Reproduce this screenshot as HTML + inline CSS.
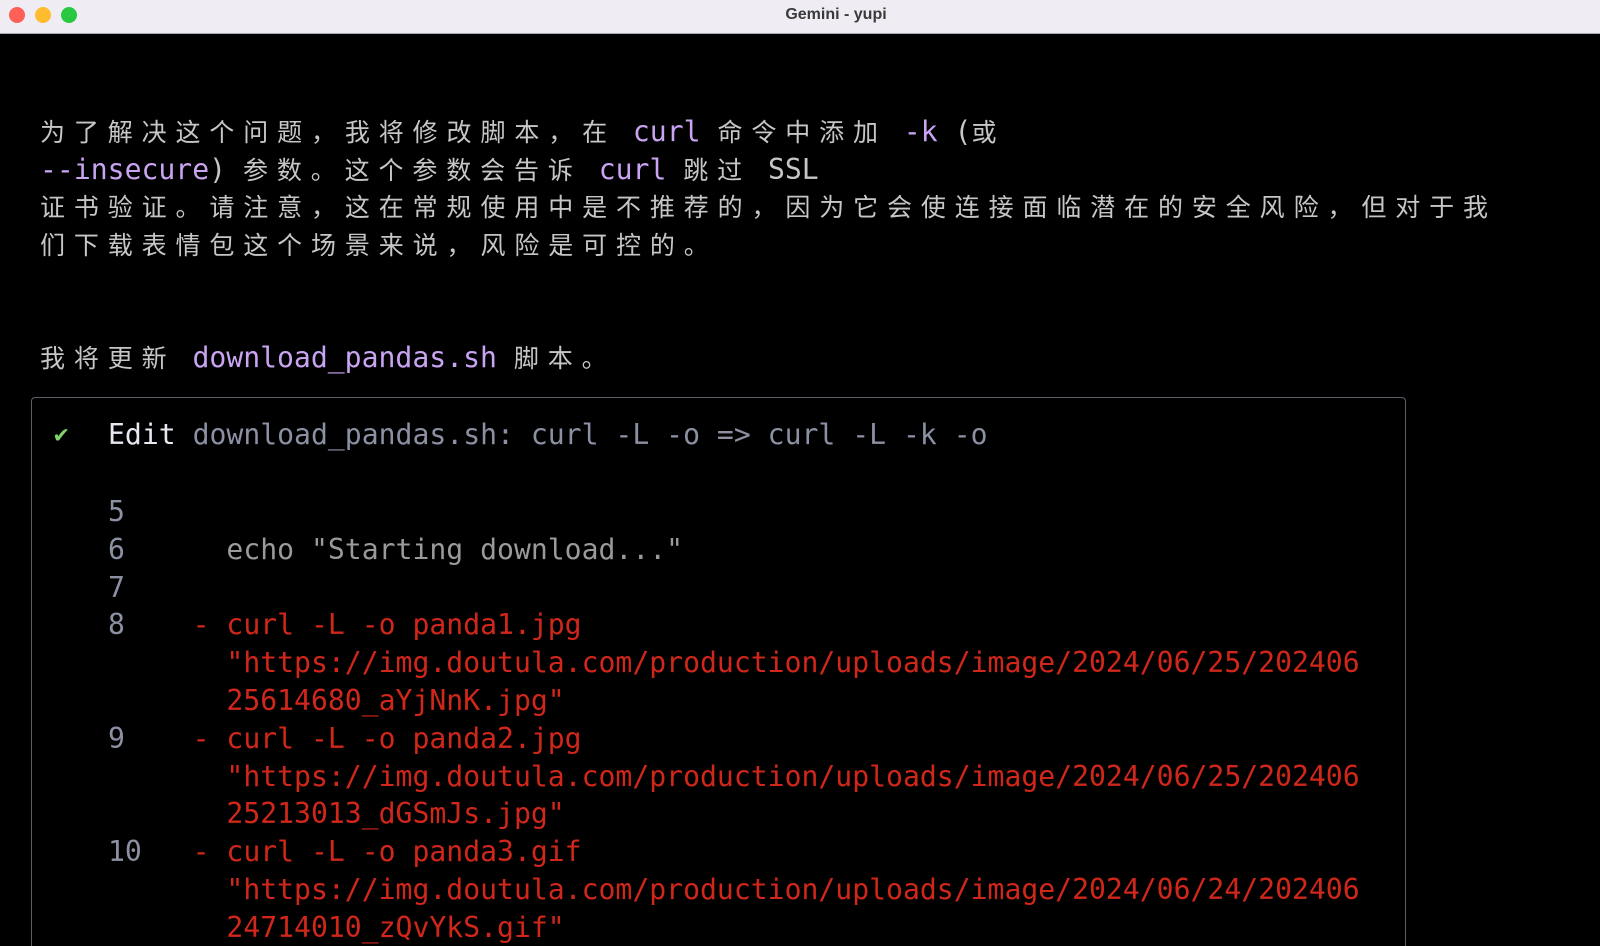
<!DOCTYPE html>
<html><head><meta charset="utf-8"><style>
html,body{margin:0;padding:0;background:#000;width:1600px;height:946px;overflow:hidden;position:relative}
.tb{position:absolute;left:0;top:0;width:1600px;height:33px;background:#efedf3;border-bottom:1px solid #a9a7ad}
.tb .t{position:absolute;left:36px;width:1600px;top:6px;text-align:center;font:bold 16px "Liberation Sans",sans-serif;color:#3a3a3a}
.dot{position:absolute;top:7px;width:16px;height:16px;border-radius:50%}
.l{position:absolute;white-space:pre;font-family:"DejaVu Sans Mono","Liberation Mono","Noto Sans CJK SC",monospace;font-size:28.1px;line-height:37.8px;height:37.8px;color:#c6c6c6}
.c{font-family:"Noto Sans CJK SC",sans-serif;font-size:25px;letter-spacing:8.88px;color:#c6c6c6}
.p{color:#c9a4f2}
.g{color:#8b90a3}
.r{color:#d0271a}
.box{position:absolute;left:31px;top:397px;width:1373px;height:560px;border:1.5px solid #5d5f68;border-bottom:none;border-radius:4px 4px 0 0}
.clip{position:absolute;left:0;top:0;width:1600px;height:946px;overflow:hidden}
</style></head><body>
<div class="tb"><div class="dot" style="left:9px;background:#fe5f57"></div><div class="dot" style="left:35px;background:#febc2e"></div><div class="dot" style="left:61px;background:#28c840"></div><div class="t">Gemini - yupi</div></div>

<div class="clip">
<div class="l" style="left:40px;top:113px"><span class="c">为了解决这个问题，我将修改脚本，在</span> <span class="p">curl</span> <span class="c">命令中添加</span> <span class="p">-k</span> (<span class="c">或</span></div>
<div class="l" style="left:40px;top:151px"><span class="p">--insecure</span>) <span class="c">参数。这个参数会告诉</span> <span class="p">curl</span> <span class="c">跳过</span> SSL</div>
<div class="l" style="left:40px;top:188px"><span class="c">证书验证。请注意，这在常规使用中是不推荐的，因为它会使连接面临潜在的安全风险，但对于我</span></div>
<div class="l" style="left:40px;top:226px"><span class="c">们下载表情包这个场景来说，风险是可控的。</span></div>
<div class="l" style="left:40px;top:339px"><span class="c">我将更新</span> <span class="p">download_pandas.sh</span> <span class="c">脚本。</span></div>

<div class="box"></div>
<div class="l" style="left:54px;top:416px;color:#7fd36a;font-size:24px">✔</div>
<div class="l" style="left:108px;top:416px"><span style="color:#e8e8f2">Edit</span> <span class="g">download_pandas.sh: curl -L -o =&gt; curl -L -k -o</span></div>
<div class="l g" style="left:108px;top:493px;height:453px;overflow:hidden">5
6      <span style="color:#9a9a9a">echo "Starting download..."</span>
7
8    <span class="r">- curl -L -o panda1.jpg</span>
       <span class="r">"https://img.doutula.com/production/uploads/image/2024/06/25/202406</span>
       <span class="r">25614680_aYjNnK.jpg"</span>
9    <span class="r">- curl -L -o panda2.jpg</span>
       <span class="r">"https://img.doutula.com/production/uploads/image/2024/06/25/202406</span>
       <span class="r">25213013_dGSmJs.jpg"</span>
10   <span class="r">- curl -L -o panda3.gif</span>
       <span class="r">"https://img.doutula.com/production/uploads/image/2024/06/24/202406</span>
       <span class="r">24714010_zQvYkS.gif"</span></div>
</div>
</body></html>
